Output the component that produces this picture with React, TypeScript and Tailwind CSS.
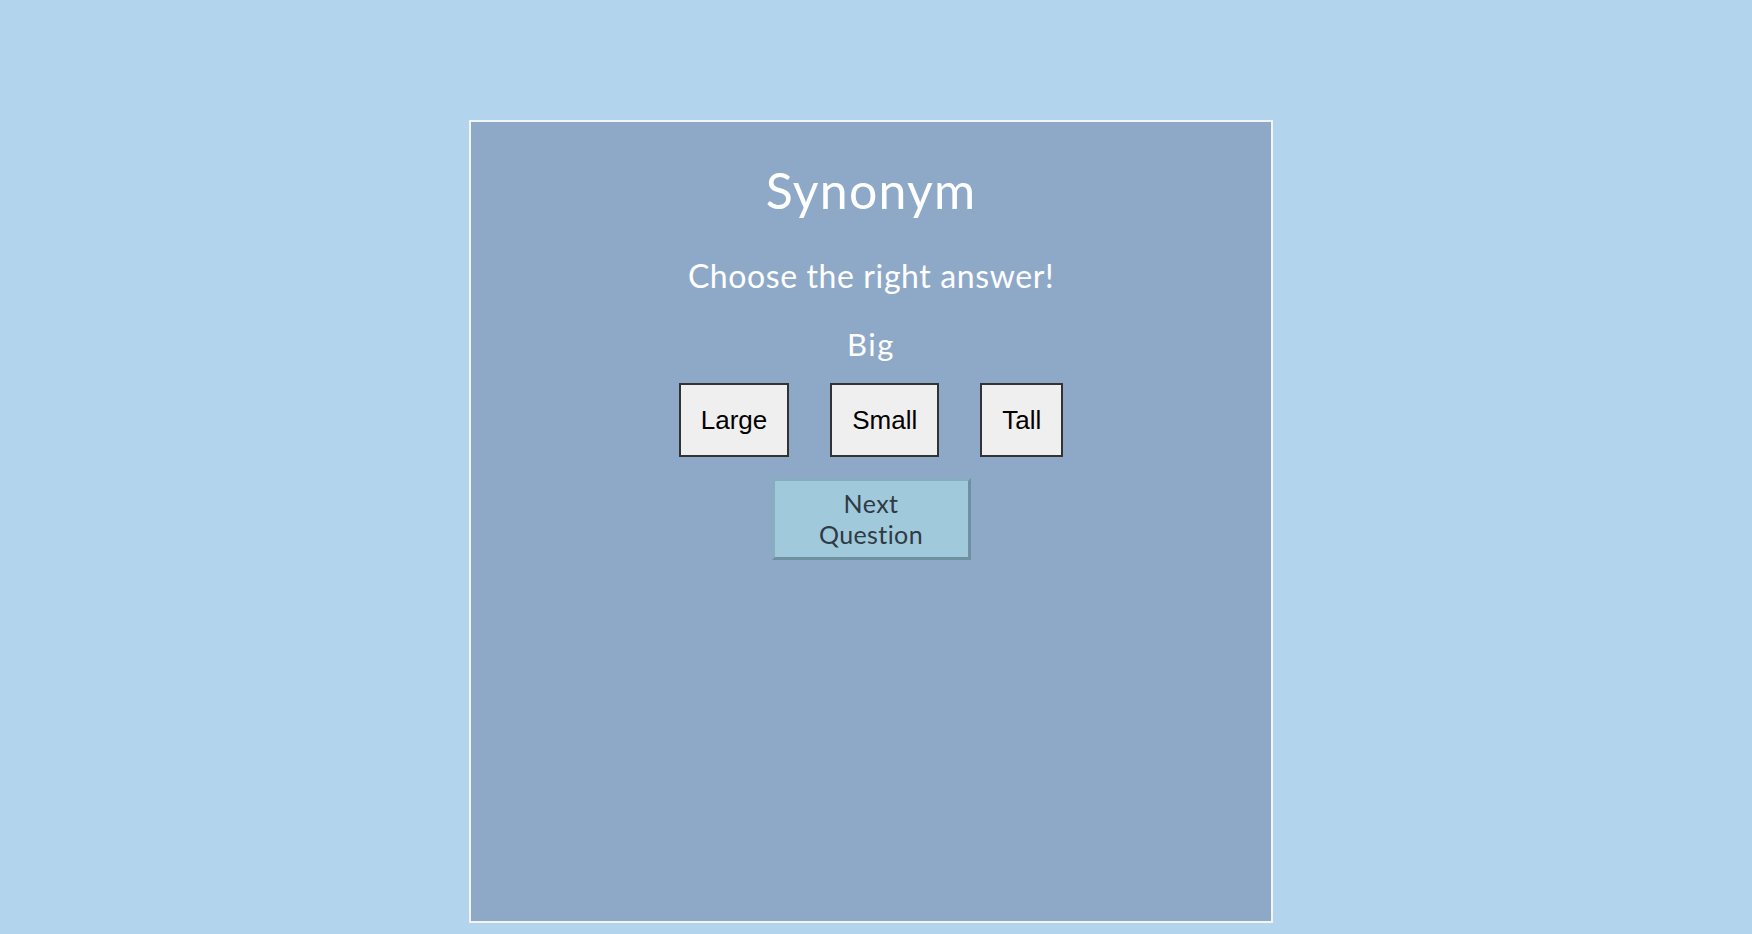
import { useState } from "react";

const choices = ["Large", "Small", "Tall"];

export default function App() {
  const [picked, setPicked] = useState<string | null>(null);

  return (
    <div className="min-h-screen bg-[#b3d4ed] pt-[120px] pr-[10px] font-['Lato','Noto_Sans',sans-serif]">
      <div className="mx-auto flex h-[803px] w-[804px] flex-col items-center border-2 border-[#f2f4f6] bg-[#8ea9c8] text-white">
        <h1 className="mt-[39px] text-[50px] leading-[58px] tracking-[1.2px]">Synonym</h1>
        <p className="mt-[37px] text-[32px] leading-[40px] tracking-[0.6px]">Choose the right answer!</p>
        <p className="mt-[30px] text-[31px] leading-[36px] tracking-[1.5px]">Big</p>
        <div className="mt-[21px] flex gap-[41px]">
          {choices.map((c) => (
            <button
              key={c}
              onClick={() => setPicked(c)}
              className={
                "border-2 border-[#333] px-[20px] py-[20px] font-['Liberation_Sans',Arial,sans-serif] text-[26px] leading-[30px] text-black " +
                (picked === c ? "bg-[#e0e0e0]" : "bg-[#efefef]")
              }
            >
              {c}
            </button>
          ))}
        </div>
        <button className="mt-[21px] w-[199px] border-[3px] border-t-[#88aebe] border-l-[#88aebe] border-r-[#6f919f] border-b-[#6f919f] bg-[#a0c9db] py-[7px] text-[25px] leading-[31px] tracking-[0.4px] text-[#2e3a44]">
          Next
          <br />
          Question
        </button>
      </div>
    </div>
  );
}
